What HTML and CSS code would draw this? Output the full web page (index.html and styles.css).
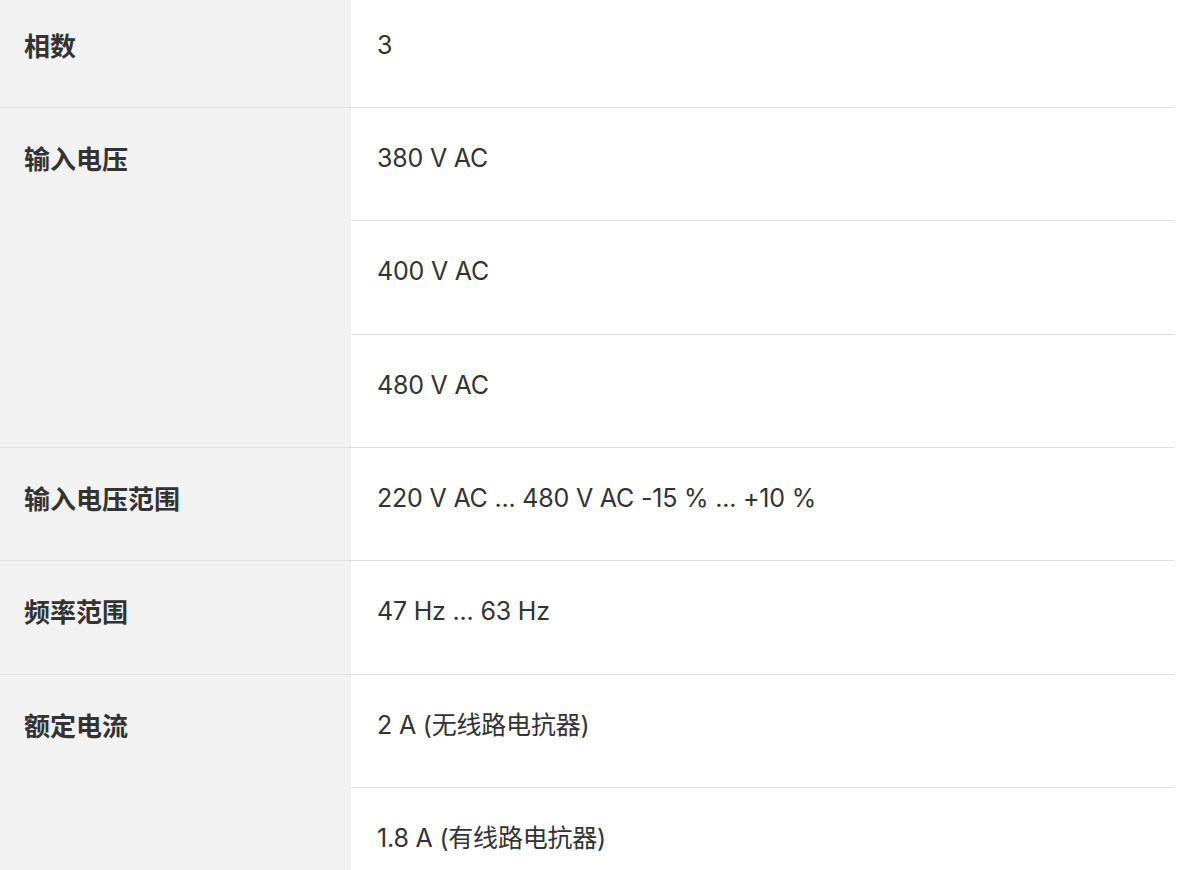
FILE: index.html
```html
<!DOCTYPE html>
<html lang="zh-CN">
<head>
<meta charset="utf-8">
<link rel="stylesheet" href="styles.css">
</head>
<body>
<table class="spec">
  <tbody>
    <tr>
      <th class="label">相数</th>
      <td class="value">3</td>
    </tr>
    <tr>
      <th class="label" rowspan="3">输入电压</th>
      <td class="value">380 V AC</td>
    </tr>
    <tr><td class="value">400 V AC</td></tr>
    <tr><td class="value">480 V AC</td></tr>
    <tr>
      <th class="label">输入电压范围</th>
      <td class="value">220 V AC ... 480 V AC -15 % ... +10 %</td>
    </tr>
    <tr>
      <th class="label">频率范围</th>
      <td class="value">47 Hz ... 63 Hz</td>
    </tr>
    <tr>
      <th class="label" rowspan="2">额定电流</th>
      <td class="value">2 A (无线路电抗器)</td>
    </tr>
    <tr><td class="value">1.8 A (有线路电抗器)</td></tr>
  </tbody>
</table>
</body>
</html>
```
FILE: styles.css
```css
html, body {
  margin: 0;
  padding: 0;
  background: #ffffff;
  overflow: hidden;
}
body {
  font-family: "Inter", "Noto Sans CJK SC", sans-serif;
  color: #333333;
}
.spec {
  width: 1174px;
  border-collapse: collapse;
  margin-top: -5.33px;
  table-layout: fixed;
}
.spec tr {
  border-bottom: 1px solid #e0e0e0;
}
.label {
  width: 351px;
  box-sizing: border-box;
  background: #f2f2f2;
  text-align: left;
  vertical-align: top;
  font-family: "Noto Sans CJK SC", sans-serif;
  font-weight: 700;
  font-size: 26px;
  line-height: 28px;
  padding: 36px 0 48.33px 24px;
  color: #333333;
  border-bottom: 1px solid #e0e0e0;
}
.value {
  vertical-align: top;
  font-size: 25px;
  letter-spacing: -0.2px;
  line-height: 28px;
  padding: 36px 0 48.33px 26px;
  color: #333333;
  border-bottom: 1px solid #e0e0e0;
}
```
